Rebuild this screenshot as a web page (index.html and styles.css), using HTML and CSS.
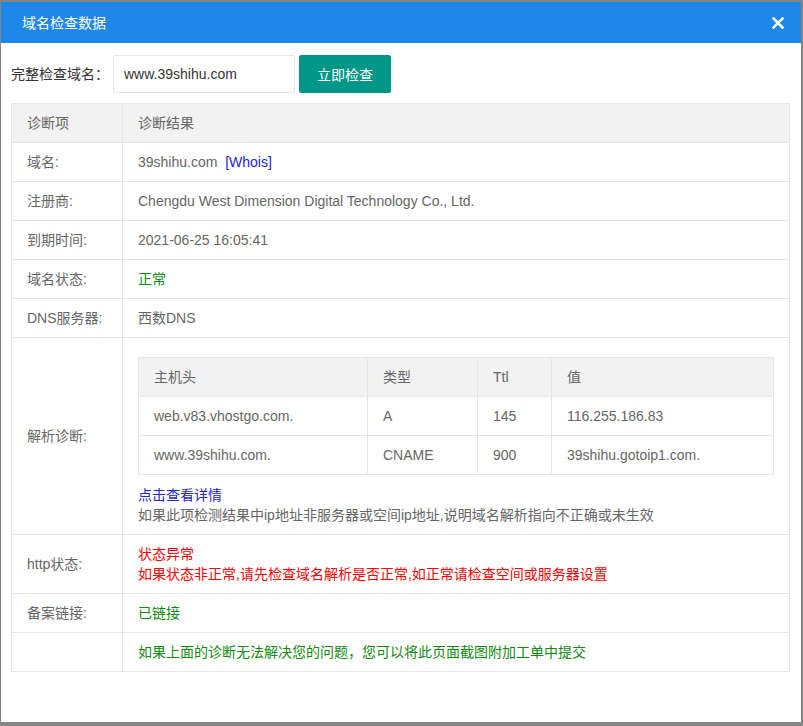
FILE: index.html
```html
<!DOCTYPE html>
<html lang="zh-CN">
<head>
<meta charset="utf-8">
<title>域名检查数据</title>
<link rel="stylesheet" href="styles.css">
</head>
<body>
<div class="dialog">
  <div class="dialog-head">
    <span class="dialog-title">域名检查数据</span>
    <span class="dialog-close">
      <svg width="12" height="12" viewBox="0 0 12 12"><path d="M1.5 1.5 L10.5 10.5 M10.5 1.5 L1.5 10.5" stroke="#fff" stroke-width="2.6" stroke-linecap="square"/></svg>
    </span>
  </div>
  <div class="dialog-body">
    <div class="check-form">
      <label class="check-label">完整检查域名：</label>
      <input class="check-input" type="text" value="www.39shihu.com">
      <button class="check-btn" type="button">立即检查</button>
    </div>
    <table class="diag">
      <colgroup><col class="c-item"><col></colgroup>
      <thead>
        <tr><th>诊断项</th><th>诊断结果</th></tr>
      </thead>
      <tbody>
        <tr><td>域名:</td><td>39shihu.com&nbsp;&nbsp;<a class="link">[Whois]</a></td></tr>
        <tr><td>注册商:</td><td>Chengdu West Dimension Digital Technology Co., Ltd.</td></tr>
        <tr><td>到期时间:</td><td>2021-06-25 16:05:41</td></tr>
        <tr><td>域名状态:</td><td class="ok">正常</td></tr>
        <tr><td>DNS服务器:</td><td>西数DNS</td></tr>
        <tr>
          <td>解析诊断:</td>
          <td>
            <table class="dns">
              <colgroup><col class="d1"><col class="d2"><col class="d3"><col></colgroup>
              <thead><tr><th>主机头</th><th>类型</th><th>Ttl</th><th>值</th></tr></thead>
              <tbody>
                <tr><td>web.v83.vhostgo.com.</td><td>A</td><td>145</td><td>116.255.186.83</td></tr>
                <tr><td>www.39shihu.com.</td><td>CNAME</td><td>900</td><td>39shihu.gotoip1.com.</td></tr>
              </tbody>
            </table>
            <div><a class="link">点击查看详情</a></div>
            <div>如果此项检测结果中ip地址非服务器或空间ip地址,说明域名解析指向不正确或未生效</div>
          </td>
        </tr>
        <tr><td>http状态:</td><td class="bad"><div>状态异常</div><div>如果状态非正常,请先检查域名解析是否正常,如正常请检查空间或服务器设置</div></td></tr>
        <tr><td>备案链接:</td><td class="ok">已链接</td></tr>
        <tr><td></td><td class="ok">如果上面的诊断无法解决您的问题，您可以将此页面截图附加工单中提交</td></tr>
      </tbody>
    </table>
  </div>
</div>
</body>
</html>
```
FILE: styles.css
```css
html, body {
  margin: 0;
  padding: 0;
}
body {
  background: #858585;
  width: 803px;
  height: 726px;
  overflow: hidden;
  padding: 2px 0 0 1px;
  box-sizing: border-box;
  font-family: "Liberation Sans", "Noto Sans CJK SC", sans-serif;
  font-size: 14px;
}
.dialog {
  width: 800px;
  height: 720px;
  background: #fff;
  display: flex;
  flex-direction: column;
}
.dialog-head {
  height: 41px;
  background: #2087ea;
  display: flex;
  align-items: center;
  justify-content: space-between;
  padding: 0 17px 0 21px;
  color: #fff;
}
.dialog-title {
  font-size: 14px;
  line-height: 20px;
}
.dialog-close {
  display: flex;
  width: 12px;
  height: 12px;
}
.dialog-body {
  padding: 12px 11px 0 10px;
}
.check-form {
  display: flex;
  align-items: center;
  height: 38px;
}
.check-label {
  color: #333;
  width: 102px;
  line-height: 20px;
}
.check-input {
  box-sizing: border-box;
  width: 182px;
  height: 38px;
  border: 1px solid #e6e6e6;
  border-radius: 2px;
  padding: 0 10px;
  font: 14px "Liberation Sans", "Noto Sans CJK SC", sans-serif;
  color: #333;
  outline: none;
}
.check-btn {
  margin-left: 4px;
  width: 92px;
  height: 38px;
  border: 0;
  border-radius: 2px;
  background: #009688;
  color: #fff;
  font: 14px "Liberation Sans", "Noto Sans CJK SC", sans-serif;
  padding: 0;
}
.diag, .dns {
  border-collapse: collapse;
  table-layout: fixed;
  color: #666;
}
.diag {
  width: 779px;
  margin-top: 10px;
}
.dns {
  width: 100%;
  margin: 10px 0;
}
.c-item { width: 111px; }
.d1 { width: 229px; }
.d2 { width: 110px; }
.d3 { width: 74px; }
.diag th, .diag td {
  border: 1px solid #e6e6e6;
  padding: 9px 15px;
  line-height: 20px;
  text-align: left;
  font-weight: normal;
  vertical-align: middle;
}
.diag th {
  background: #f2f2f2;
}
.link {
  color: #2323d6;
  text-decoration: none;
}
.ok { color: #108a10 !important; }
.bad { color: #f00 !important; }
```
